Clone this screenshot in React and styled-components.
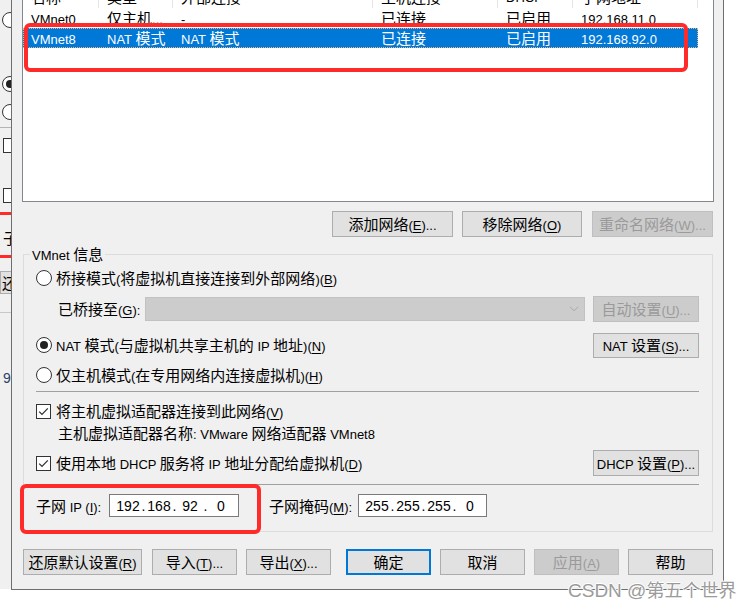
import React from 'react';
import styled, { createGlobalStyle } from 'styled-components';

const Global = createGlobalStyle`
  html, body { margin: 0; padding: 0; background: #ffffff; }
  body { width: 755px; height: 608px; overflow: hidden; }
  * { box-sizing: border-box; }
`;

const Page = styled.div`
  position: relative;
  width: 755px;
  height: 608px;
  overflow: hidden;
  background: #ffffff;
  color: #000;
  font-family: "Noto Sans CJK SC", "Liberation Sans", sans-serif;
  font-size: 15px;
  line-height: 18px;
`;

const Desk = styled.div`
  display: flex;
  align-items: flex-start;
  width: 724px;
  height: 590px;
`;

/* ---------- background window fragment on the left ---------- */
const Strip = styled.div`
  width: 11px;
  height: 589px;
  flex-shrink: 0;
  background: #f0f0f0;
  overflow: hidden;
  display: flex;
  flex-direction: column;
  align-items: flex-start;
`;

const StripRadio = styled.span`
  flex-shrink: 0;
  margin-top: ${p => p.$mt}px;
  margin-left: 2px;
  width: 16px;
  min-width: 16px;
  height: 16px;
  border-radius: 50%;
  border: 1px solid #333;
  background: #fff;
  display: flex;
  align-items: center;
  justify-content: center;
  &::after {
    content: '';
    display: ${p => (p.$on ? 'block' : 'none')};
    width: 8px;
    height: 8px;
    border-radius: 50%;
    background: #222;
  }
`;

const StripLine = styled.span`
  flex-shrink: 0;
  margin-top: ${p => p.$mt}px;
  width: 11px;
  height: ${p => p.$h || 1}px;
  background: ${p => p.$c};
`;

const StripBox = styled.span`
  flex-shrink: 0;
  margin-top: ${p => p.$mt}px;
  margin-left: 3px;
  width: 15px;
  min-width: 15px;
  height: 15px;
  border: 1px solid #333;
  background: #fff;
`;

const StripText = styled.span`
  flex-shrink: 0;
  margin-top: ${p => p.$mt}px;
  margin-left: 3px;
  white-space: nowrap;
  color: ${p => p.$c || '#000'};
  font-family: ${p => (p.$latin ? '"Liberation Sans", sans-serif' : 'inherit')};
  font-size: ${p => (p.$latin ? 14 : 15)}px;
`;

const StripButton = styled.span`
  flex-shrink: 0;
  margin-top: ${p => p.$mt}px;
  width: 30px;
  min-width: 30px;
  height: 23px;
  border: 1px solid #adadad;
  background: #e1e1e1;
  padding-left: 1px;
  white-space: nowrap;
  display: flex;
  align-items: center;
`;

/* ---------- dialog ---------- */
const Dialog = styled.div`
  flex: 1;
  height: 590px;
  background: #f0f0f0;
  border: 1px solid #6e6e6e;
  border-top: none;
  padding: 0 9px 13px 10px;
  display: flex;
  flex-direction: column;
`;

const Lat = styled.span`
  font-family: "Liberation Sans", sans-serif;
  font-size: 13px;
  line-height: 1;
`;

const Key = styled.span`
  text-decoration: underline;
  text-decoration-thickness: 1px;
  text-underline-offset: 2px;
`;

const Label = styled.span`
  white-space: nowrap;
  flex-shrink: 0;
  width: ${p => (p.$w ? `${p.$w}px` : 'auto')};
  padding-left: ${p => p.$pl || 0}px;
  color: ${p => (p.$dim ? '#9a9a9a' : 'inherit')};
`;

function t(s) {
  const segs = [];
  for (let i = 0; i < s.length; i++) {
    let ch = s[i];
    let k = false;
    if (ch === '&' && i + 1 < s.length) {
      i++;
      ch = s[i];
      k = true;
    }
    const lat = /[\x20-\x7e]/.test(ch);
    const last = segs[segs.length - 1];
    if (last && !k && !last.k && last.lat === lat) last.t += ch;
    else segs.push({ t: ch, lat, k });
  }
  return segs.map((g, i) => {
    const inner = g.lat ? <Lat>{g.t}</Lat> : g.t;
    if (g.k) return <Key key={i}>{inner}</Key>;
    return <React.Fragment key={i}>{inner}</React.Fragment>;
  });
}

/* list view */
const List = styled.div`
  height: 202px;
  flex-shrink: 0;
  background: #fff;
  border: 1px solid #828790;
  border-top: none;
`;

const HeadRow = styled.div`
  display: flex;
  height: 8px;
  overflow: hidden;
`;

const HeadCell = styled.div`
  width: ${p => p.$w}px;
  flex-shrink: 0;
  height: 8px;
  border-right: 1px solid #e5e5e5;
  padding: 0 0 4px 8px;
  display: flex;
  align-items: flex-end;
  white-space: nowrap;
  line-height: 15px;
`;

const Row = styled.div`
  display: flex;
  align-items: center;
  width: 675px;
  height: 20px;
  background: ${p => (p.$sel ? '#0078d7' : 'transparent')};
  color: ${p => (p.$sel ? '#fff' : '#000')};
  outline: ${p => (p.$sel ? '1px dotted #e9b27a' : 'none')};
  outline-offset: -1px;
`;

const Cell = styled.div`
  width: ${p => p.$w}px;
  flex-shrink: 0;
  padding-left: 8px;
  white-space: nowrap;
  overflow: hidden;
`;

/* buttons */
const Bar = styled.div`
  display: flex;
  align-items: center;
  justify-content: ${p => p.$justify || 'flex-start'};
  margin-top: ${p => p.$mt}px;
  margin-left: ${p => p.$ml || 0}px;
  margin-right: ${p => p.$mr || 0}px;
  height: 26px;
  flex-shrink: 0;
`;

const Btn = styled.button`
  flex-shrink: 0;
  width: ${p => p.$w}px;
  height: ${p => p.$h || 26}px;
  margin: 0 0 0 ${p => p.$gap || 0}px;
  padding: 0;
  font: inherit;
  display: flex;
  align-items: center;
  justify-content: center;
  background: ${p => (p.$disabled ? '#cccccc' : '#e1e1e1')};
  border: ${p => (p.$primary ? '2px solid #0078d7' : `1px solid ${p.$disabled ? '#bfbfbf' : '#adadad'}`)};
  color: ${p => (p.$disabled ? '#9a9a9a' : '#000')};
  white-space: nowrap;
`;

/* group box */
const Group = styled.fieldset`
  margin: 8px 1px 0 1px;
  padding: 0;
  min-width: 0;
  border: 1px solid #dcdcdc;
  flex-shrink: 0;
`;

const Legend = styled.legend`
  margin-left: 6px;
  padding: 0 2px;
  line-height: 18px;
  white-space: nowrap;
`;

const GroupBody = styled.div`
  padding: 0 13px 14px 12px;
  display: flex;
  flex-direction: column;
`;

const OptRow = styled.div`
  display: flex;
  align-items: center;
  height: ${p => p.$h || 20}px;
  margin-top: ${p => p.$mt}px;
  gap: ${p => p.$gap ?? 4}px;
  flex-shrink: 0;
`;

const Spacer = styled.div`
  flex: 1;
`;

const Radio = styled.span`
  flex-shrink: 0;
  width: 16px;
  height: 16px;
  border-radius: 50%;
  border: 1px solid #333;
  background: #fff;
  display: flex;
  align-items: center;
  justify-content: center;
  &::after {
    content: '';
    display: ${p => (p.$on ? 'block' : 'none')};
    width: 8px;
    height: 8px;
    border-radius: 50%;
    background: #222;
  }
`;

const CheckBox = styled.span`
  flex-shrink: 0;
  width: 15px;
  height: 15px;
  border: 1px solid #333;
  background: #fff;
  display: flex;
  align-items: center;
  justify-content: center;
  margin-right: 1px;
`;

const Sep = styled.div`
  margin-top: ${p => p.$mt}px;
  height: 1px;
  background: #a0a0a0;
  flex-shrink: 0;
`;

const Combo = styled.div`
  flex: 1;
  height: 24px;
  background: #cccccc;
  border: 1px solid #c2c2c2;
  display: flex;
  align-items: center;
  justify-content: flex-end;
  padding-right: 5px;
`;

const IpBox = styled.div`
  flex-shrink: 0;
  width: ${p => p.$w}px;
  height: 23px;
  background: #fff;
  border: 1px solid #7a7a7a;
  display: flex;
  align-items: center;
  padding-left: 6px;
  font-family: "Liberation Sans", sans-serif;
  font-size: 14px;
`;

const IpPart = styled.span`
  width: 24px;
  text-align: center;
`;

const IpDot = styled.span`
  width: 7px;
  text-align: center;
`;

/* overlays */
const Mark = styled.div`
  position: absolute;
  left: ${p => p.$x}px;
  top: ${p => p.$y}px;
  width: ${p => p.$w}px;
  height: ${p => p.$h}px;
  border: 4px solid #ff2a2a;
  border-radius: 6px;
  pointer-events: none;
`;

const Watermark = styled.div`
  position: absolute;
  left: 568px;
  top: 578px;
  font-size: 18px;
  line-height: 22px;
  color: #9b9b9b;
  white-space: nowrap;
  text-shadow: 1px 0 0 #fff, -1px 0 0 #fff, 0 1px 0 #fff, 0 -1px 0 #fff;
`;

const WmLat = styled.span`
  font-family: "Liberation Sans", sans-serif;
  font-size: 19px;
`;

const Chevron = () => (
  <svg width="10" height="6" viewBox="0 0 10 6">
    <path d="M1 0.8 L5 4.8 L9 0.8" stroke="#a8a8a8" strokeWidth="1" fill="none" />
  </svg>
);

const Tick = () => (
  <svg width="13" height="13" viewBox="0 0 13 13">
    <path d="M2.2 6.6 L5 9.4 L10.8 3.4" stroke="#333" strokeWidth="1.3" fill="none" />
  </svg>
);

function Ip({ parts, w }) {
  return (
    <IpBox $w={w}>
      {parts.map((p, i) => (
        <React.Fragment key={i}>
          {i > 0 && <IpDot>.</IpDot>}
          <IpPart>{p}</IpPart>
        </React.Fragment>
      ))}
    </IpBox>
  );
}

const cols = [76, 74, 200, 125, 75, 125];
const head = ['名称', '类型', '外部连接', '主机连接', 'DHCP', '子网地址'];
const rows = [
  ['VMnet0', '仅主机...', '-', '已连接', '已启用', '192.168.11.0'],
  ['VMnet8', 'NAT 模式', 'NAT 模式', '已连接', '已启用', '192.168.92.0'],
];

export default function App() {
  return (
    <Page>
      <Global />
      <Desk>
        <Strip>
          <StripRadio $mt={12} />
          <StripRadio $mt={48} $on />
          <StripRadio $mt={12} />
          <StripLine $mt={7} $c="#b4b4b4" />
          <StripBox $mt={10} />
          <StripBox $mt={35} />
          <StripLine $mt={9} $h={3} $c="#ff2a2a" />
          <StripText $mt={14}>子</StripText>
          <StripLine $mt={8} $h={3} $c="#ff2a2a" />
          <StripButton $mt={13}>还</StripButton>
          <StripLine $mt={18} $c="#c8c8c8" />
          <StripText $mt={56} $latin $c="#2a3f66">9</StripText>
        </Strip>

        <Dialog>
          <List>
            <HeadRow>
              {head.map((h, i) => (
                <HeadCell key={i} $w={cols[i]}>
                  <Label>{t(h)}</Label>
                </HeadCell>
              ))}
            </HeadRow>
            {rows.map((r, ri) => (
              <Row key={ri} $sel={ri === 1}>
                {r.map((c, ci) => (
                  <Cell key={ci} $w={cols[ci]}>
                    {t(c)}
                  </Cell>
                ))}
              </Row>
            ))}
          </List>

          <Bar $mt={9} $mr={1} $justify="flex-end">
            <Btn $w={121}><Label>{t('添加网络(&E)...')}</Label></Btn>
            <Btn $w={120} $gap={9}><Label>{t('移除网络(&O)')}</Label></Btn>
            <Btn $w={121} $gap={10} $disabled><Label>{t('重命名网络(&W)...')}</Label></Btn>
          </Bar>

          <Group>
            <Legend>{t('VMnet 信息')}</Legend>
            <GroupBody>
              <OptRow $mt={3} $h={24}>
                <Radio />
                <Label>{t('桥接模式(将虚拟机直接连接到外部网络)(&B)')}</Label>
              </OptRow>

              <OptRow $mt={6} $h={26} $gap={0}>
                <Label $w={109} $pl={22}>{t('已桥接至(&G):')}</Label>
                <Combo><Chevron /></Combo>
                <Btn $w={106} $gap={8} $disabled><Label>{t('自动设置(&U)...')}</Label></Btn>
              </OptRow>

              <OptRow $mt={10} $h={26}>
                <Radio $on />
                <Label>{t('NAT 模式(与虚拟机共享主机的 IP 地址)(&N)')}</Label>
                <Spacer />
                <Btn $w={106} $h={25}><Label>{t('NAT 设置(&S)...')}</Label></Btn>
              </OptRow>

              <OptRow $mt={7}>
                <Radio />
                <Label>{t('仅主机模式(在专用网络内连接虚拟机)(&H)')}</Label>
              </OptRow>

              <Sep $mt={6} />

              <OptRow $mt={9}>
                <CheckBox><Tick /></CheckBox>
                <Label>{t('将主机虚拟适配器连接到此网络(&V)')}</Label>
              </OptRow>

              <OptRow $mt={2}>
                <Label $pl={22}>{t('主机虚拟适配器名称: VMware 网络适配器 VMnet8')}</Label>
              </OptRow>

              <OptRow $mt={7} $h={26}>
                <CheckBox><Tick /></CheckBox>
                <Label>{t('使用本地 DHCP 服务将 IP 地址分配给虚拟机(&D)')}</Label>
                <Spacer />
                <Btn $w={106}><Label>{t('DHCP 设置(&P)...')}</Label></Btn>
              </OptRow>

              <Sep $mt={8} />

              <OptRow $mt={9} $h={23} $gap={0}>
                <Label $w={73}>{t('子网 IP (&I):')}</Label>
                <Ip parts={['192', '168', '92', '0']} w={130} />
                <Label $w={119} $pl={30}>{t('子网掩码(&M):')}</Label>
                <Ip parts={['255', '255', '255', '0']} w={129} />
              </OptRow>
            </GroupBody>
          </Group>

          <Bar $mt={17} $ml={1}>
            <Btn $w={119}><Label>{t('还原默认设置(&R)')}</Label></Btn>
            <Btn $w={85} $gap={10}><Label>{t('导入(&T)...')}</Label></Btn>
            <Btn $w={85} $gap={9}><Label>{t('导出(&X)...')}</Label></Btn>
            <Btn $w={85} $gap={15} $primary><Label>{t('确定')}</Label></Btn>
            <Btn $w={85} $gap={9}><Label>{t('取消')}</Label></Btn>
            <Btn $w={85} $gap={9} $disabled><Label>{t('应用(&A)')}</Label></Btn>
            <Btn $w={85} $gap={9}><Label>{t('帮助')}</Label></Btn>
          </Bar>
        </Dialog>
      </Desk>

      <Mark $x={24} $y={23} $w={664} $h={49} />
      <Mark $x={20} $y={484} $w={241} $h={50} />

      <Watermark>
        <WmLat>CSDN @</WmLat>第五个世界
      </Watermark>
    </Page>
  );
}
